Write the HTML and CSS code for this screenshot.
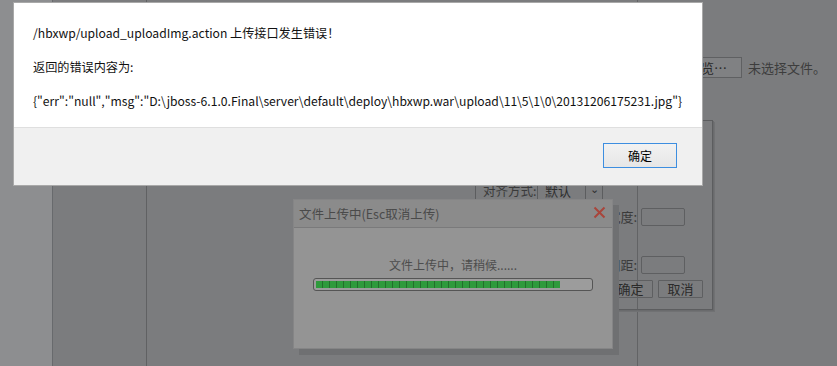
FILE: index.html
```html
<!DOCTYPE html>
<html lang="zh-CN">
<head>
    <meta charset="utf-8">
    <title>上传</title>
    <link rel="stylesheet" href="styles.css">
</head>
<body>

<div class="page">
    <div class="side"></div>
    <div class="nav"></div>
    <div class="editor"></div>
    <div class="aside">
        <div class="file-row">
            <span class="file-btn">浏览…</span>
            <span class="file-name">未选择文件。</span>
        </div>
    </div>
</div>

<!-- 图片属性面板 -->
<div class="panel">
    <div class="align-row">
        <span class="align-label">对齐方式:</span>
        <span class="align-select">默认<span class="align-arrow">&#8964;</span></span>
    </div>
    <div class="field-row first">
        <span class="field-label">宽度:</span><span class="field-input"></span>
    </div>
    <div class="field-row second">
        <span class="field-label">间距:</span><span class="field-input"></span>
    </div>
    <div class="btn-row">
        <span class="panel-btn">确定</span>
        <span class="panel-btn">取消</span>
    </div>
</div>

<!-- 上传进度 -->
<div class="upload">
    <div class="upload-title">
        <span>文件上传中(Esc取消上传)</span>
        <svg class="upload-close" width="13" height="13" viewBox="0 0 13 13">
            <path d="M1.5 1.5 L11.5 11.5 M11.5 1.5 L1.5 11.5" stroke="#a8453b" stroke-width="2"/>
        </svg>
    </div>
    <div class="upload-body">
        <div class="upload-text">文件上传中，请稍候......</div>
        <div class="progress"><div class="progress-fill" style="width: 89%"></div></div>
    </div>
</div>

<!-- 浏览器提示框 -->
<div class="alert">
    <div class="alert-msg">
        <p>/hbxwp/upload_uploadImg.action 上传接口发生错误！</p>
        <p>返回的错误内容为:</p>
        <p>{"err":"null","msg":"D:\jboss-6.1.0.Final\server\default\deploy\hbxwp.war\upload\11\5\1\0\20131206175231.jpg"}</p>
    </div>
    <div class="alert-foot">
        <span class="alert-btn">确定</span>
    </div>
</div>

</body>
</html>
```

FILE: styles.css
```css
html, body {
    margin: 0;
    padding: 0;
    width: 837px;
    height: 366px;
    overflow: hidden;
    font-family: "Noto Sans CJK SC", "Liberation Sans", sans-serif;
    font-size: 12px;
    background-color: #7b7c7e;
}

.page {
    display: flex;
    height: 366px;
}

.side {
    width: 52px;
    background-color: #8d8e90;
    border-right: 1px solid #686a6d;
}

.nav {
    width: 93px;
    border-right: 1px solid #606163;
}

.editor {
    width: 490px;
    border-right: 1px solid #626365;
}

.aside {
    flex: 1;
}

.file-row {
    display: flex;
    align-items: center;
    justify-content: flex-end;
    padding-top: 57px;
    padding-right: 11px;
}

.file-btn {
    box-sizing: border-box;
    height: 21px;
    line-height: 19px;
    padding: 0 14px 0 12px;
    border: 1px solid #5f6062;
    background-color: #808183;
    color: #2a2a2a;
    font-size: 13px;
}

.file-name {
    margin-left: 6px;
    color: #3d3d3d;
    font-size: 13px;
}

.panel {
    position: absolute;
    left: 475px;
    top: 120px;
    width: 236px;
    height: 188px;
    border: 1px solid #5c5d5f;
    box-shadow: 1px 1px 0 #6a6b6d, 2px 2px 0 #707173;
    color: #2e2e2e;
    font-size: 13px;
}

.align-row {
    display: flex;
    align-items: center;
    height: 16px;
    margin-top: 62px;
    line-height: 16px;
}

.align-label {
    width: 54px;
    padding-left: 7px;
    border-right: 1px solid #5c5d5f;
    color: #3a3a3a;
    font-size: 12.5px;
    white-space: nowrap;
}

.align-select {
    display: flex;
    align-items: center;
    padding-left: 7px;
    width: 58px;
}

.align-arrow {
    margin-left: auto;
    width: 16px;
    height: 16px;
    border-left: 1px solid #5c5d5f;
    border-right: 1px solid #5c5d5f;
    text-align: center;
    font-size: 11px;
    line-height: 10px;
}

.field-row {
    display: flex;
    align-items: center;
    justify-content: flex-end;
    padding-right: 27px;
}

.field-row.first {
    margin-top: 8px;
}

.field-row.second {
    margin-top: 29px;
}

.field-label {
    margin-right: 4px;
    color: #3a3a3a;
}

.field-input {
    box-sizing: border-box;
    width: 44px;
    height: 18px;
    border: 1px solid #5e5f61;
    border-radius: 2px;
}

.btn-row {
    display: flex;
    justify-content: flex-end;
    gap: 5px;
    margin-top: 6px;
    padding-right: 9px;
}

.panel-btn {
    box-sizing: border-box;
    width: 45px;
    height: 18px;
    line-height: 16px;
    text-align: center;
    border: 1px solid #5e5f61;
    border-radius: 1px;
    color: #2a2a2a;
}

.upload {
    position: absolute;
    left: 293px;
    top: 199px;
    box-sizing: border-box;
    width: 320px;
    height: 150px;
    border: 1px solid #858586;
    background-color: #949494;
    box-shadow: 6px 6px 0 #6f7072;
}

.upload-title {
    display: flex;
    align-items: center;
    justify-content: space-between;
    height: 27px;
    padding: 0 6px 0 5px;
    background-color: #8b8b8b;
    border-bottom: 1px solid #7a7a7b;
    color: #4a4a4a;
    font-size: 12.5px;
}

.upload-close {
    margin-top: -3px;
}

.upload-body {
    padding-top: 28px;
}

.upload-text {
    text-align: center;
    color: #4d4d4d;
    line-height: 18px;
}

.progress {
    box-sizing: border-box;
    width: 280px;
    height: 13px;
    margin: 4px auto 0;
    padding: 2px;
    border: 1px solid #555;
    border-radius: 3px;
    background-color: #9c9c9c;
}

.progress-fill {
    height: 100%;
    background: repeating-linear-gradient(90deg, #2f9a3c 0, #2f9a3c 6px, #236f2b 6px, #236f2b 7px);
}

.alert {
    position: absolute;
    left: 13px;
    top: 2px;
    box-sizing: border-box;
    width: 690px;
    height: 184px;
    border: 1px solid #a9a9a9;
    background-color: #fff;
    color: #111;
}

.alert-msg {
    height: 124px;
    padding: 21px 19px 0;
    box-sizing: border-box;
    font-size: 12.15px;
}

.alert-msg p {
    margin: 0 0 16px;
    line-height: 18px;
    white-space: nowrap;
}

.alert-foot {
    display: flex;
    justify-content: flex-end;
    align-items: flex-start;
    box-sizing: border-box;
    height: 58px;
    padding: 15px 25px 0 0;
    border-top: 1px solid #dfdfdf;
    background-color: #f0f0f0;
}

.alert-btn {
    box-sizing: border-box;
    width: 74px;
    height: 25px;
    line-height: 23px;
    text-align: center;
    border: 1px solid #3d8ee0;
    background: linear-gradient(#f2f2f2, #e6e6e6);
    color: #000;
}
```
